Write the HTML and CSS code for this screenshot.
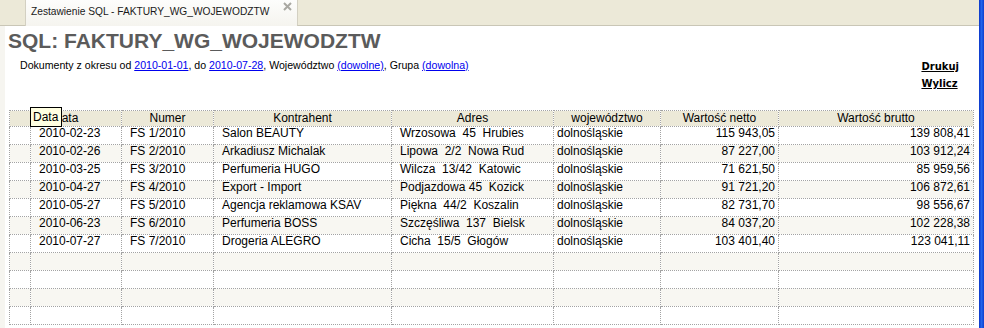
FILE: index.html
```html
<!DOCTYPE html>
<html lang="pl">
<head>
    <meta charset="UTF-8">
    <title>Zestawienie SQL - FAKTURY_WG_WOJEWODZTW</title>
    <link rel="stylesheet" href="styles.css">
</head>
<body>
<div class="window">
    <div class="main">
        <div class="tabs">
            <div class="tabs-lead"></div>
            <div class="tab">
                <span class="tab-title">Zestawienie SQL - FAKTURY_WG_WOJEWODZTW</span>
                <svg class="tab-close" width="9" height="9" viewBox="0 0 9 9"><path d="M1 1L8 8M8 1L1 8" stroke="#a9a8a2" stroke-width="2"/></svg>
            </div>
            <div class="tabs-rest"></div>
        </div>

        <div class="page">
            <h1>SQL: FAKTURY_WG_WOJEWODZTW</h1>

            <div class="toolbar">
                <p class="filters">Dokumenty z okresu od <a href="#">2010-01-01</a>, do <a href="#">2010-07-28</a>, Województwo <a href="#">(dowolne)</a>, Grupa <a href="#">(dowolna)</a></p>
                <div class="actions">
                    <a href="#">Drukuj</a>
                    <a href="#">Wylicz</a>
                </div>
            </div>

            <div class="grid">
                <!-- hover hint over the first header -->
                <div class="tooltip">Data</div>
                <table>
                    <colgroup>
                        <col class="c-sel"><col class="c-date"><col class="c-num"><col class="c-name">
                        <col class="c-addr"><col class="c-prov"><col class="c-net"><col class="c-gross">
                    </colgroup>
                    <tr>
                        <th></th><th class="h-date">Data</th><th>Numer</th><th>Kontrahent</th>
                        <th>Adres</th><th>województwo</th><th>Wartość netto</th><th>Wartość brutto</th>
                    </tr>
                    <tr><td></td><td>2010-02-23</td><td>FS 1/2010</td><td>Salon BEAUTY</td><td class="addr">Wrzosowa  45  Hrubies</td><td class="prov">dolnośląskie</td><td class="num">115 943,05</td><td class="num">139 808,41</td></tr>
                    <tr><td></td><td>2010-02-26</td><td>FS 2/2010</td><td>Arkadiusz Michalak</td><td class="addr">Lipowa  2/2  Nowa Rud</td><td class="prov">dolnośląskie</td><td class="num">87 227,00</td><td class="num">103 912,24</td></tr>
                    <tr><td></td><td>2010-03-25</td><td>FS 3/2010</td><td>Perfumeria HUGO</td><td class="addr">Wilcza  13/42  Katowic</td><td class="prov">dolnośląskie</td><td class="num">71 621,50</td><td class="num">85 959,56</td></tr>
                    <tr><td></td><td>2010-04-27</td><td>FS 4/2010</td><td>Export - Import</td><td class="addr">Podjazdowa 45  Kozick</td><td class="prov">dolnośląskie</td><td class="num">91 721,20</td><td class="num">106 872,61</td></tr>
                    <tr><td></td><td>2010-05-27</td><td>FS 5/2010</td><td>Agencja reklamowa KSAV</td><td class="addr">Piękna  44/2  Koszalin</td><td class="prov">dolnośląskie</td><td class="num">82 731,70</td><td class="num">98 556,67</td></tr>
                    <tr><td></td><td>2010-06-23</td><td>FS 6/2010</td><td>Perfumeria BOSS</td><td class="addr">Szczęśliwa  137  Bielsk</td><td class="prov">dolnośląskie</td><td class="num">84 037,20</td><td class="num">102 228,38</td></tr>
                    <tr><td></td><td>2010-07-27</td><td>FS 7/2010</td><td>Drogeria ALEGRO</td><td class="addr">Cicha  15/5  Głogów</td><td class="prov">dolnośląskie</td><td class="num">103 401,40</td><td class="num">123 041,11</td></tr>
                    <tr class="empty"><td></td><td></td><td></td><td></td><td></td><td></td><td></td><td></td></tr>
                    <tr class="empty"><td></td><td></td><td></td><td></td><td></td><td></td><td></td><td></td></tr>
                    <tr class="empty"><td></td><td></td><td></td><td></td><td></td><td></td><td></td><td></td></tr>
                    <tr class="empty"><td></td><td></td><td></td><td></td><td></td><td></td><td></td><td></td></tr>
                </table>
            </div>
        </div>
    </div>
    <div class="frame-edge"></div>
</div>
</body>
</html>
```

FILE: styles.css
```css
/* XP style report window */
html, body {
    margin: 0;
    padding: 0;
}

body {
    font-family: "Liberation Sans", Arial, sans-serif;
    background-color: #fff;
    color: #000;
    height: 328px;
    overflow: hidden;
}

.window {
    display: flex;
    height: 328px;
}

.main {
    flex: 1;
    min-width: 0;
    display: flex;
    flex-direction: column;
    overflow: hidden;
}

/* blue window frame on the right */
.frame-edge {
    width: 5px;
    background: linear-gradient(to right, #0a36c8, #2263ea 50%, #0b3fcf);
}

/* tab strip */
.tabs {
    display: flex;
    height: 26px;
    flex-shrink: 0;
    background-color: #ece9d8;
}

.tabs-lead {
    width: 25px;
    border-bottom: 1px solid #c9c6b6;
    box-sizing: border-box;
}

.tab {
    width: 272px;
    display: flex;
    align-items: flex-start;
    padding: 5px 0 0 5px;
    box-sizing: border-box;
    background: linear-gradient(#fdfdfc, #f5f4ef);
    border-left: 1px solid #d3d0c2;
}

.tab-title {
    font-size: 10.2px;
    line-height: 13px;
    white-space: nowrap;
    color: #1a1a1a;
}

.tab-close {
    margin-left: auto;
    margin-right: 5px;
    margin-top: -3px;
    flex-shrink: 0;
}

.tabs-rest {
    flex: 1;
    border-left: 1px solid #d3d0c2;
    border-bottom: 1px solid #c9c6b6;
}

/* report page */
.page {
    flex: 1;
    min-height: 0;
    overflow: hidden;
    border-left: 5px solid #f6f5f0;
    padding: 3px 0 0 3px;
}

h1 {
    margin: 0;
    font-size: 21px;
    line-height: 24px;
    font-weight: bold;
    color: #5b5b5b;
}

.toolbar {
    display: flex;
    justify-content: space-between;
    align-items: flex-start;
    margin-top: 3px;
}

.filters {
    margin: 1px 0 0 12px;
    font-size: 10.6px;
    line-height: 16px;
}

.filters a {
    color: #0000ee;
}

.actions {
    display: flex;
    flex-direction: column;
    margin: 2px 20px 0 0;
}

.actions a {
    font-family: "DejaVu Sans", sans-serif;
    font-size: 10px;
    line-height: 17px;
    font-weight: bold;
    color: #000;
}

/* grid */
.grid {
    position: relative;
    margin: 18px 0 0 1px;
}

.tooltip {
    position: absolute;
    left: 21px;
    top: -3px;
    width: 28px;
    height: 18px;
    border: 1px solid #000;
    background-color: #ffffe1;
    font-size: 12px;
    line-height: 18px;
    padding-left: 2px;
}

table {
    table-layout: fixed;
    width: 964px;
    border-collapse: collapse;
    font-size: 12px;
}

.c-sel { width: 21px; }
.c-date { width: 91px; }
.c-num { width: 92px; }
.c-name { width: 178px; }
.c-addr { width: 162px; }
.c-prov { width: 107px; }
.c-net { width: 118px; }
.c-gross { width: 195px; }

th, td {
    border: 1px dotted #a3a3a3;
    padding: 0 4px 0 8px;
    white-space: pre;
    overflow: hidden;
}

th {
    background-color: #ece9d8;
    font-weight: normal;
    line-height: 15px;
    text-align: center;
    padding: 0;
}

th.h-date {
    text-align: left;
    padding-left: 22px;
}

td {
    line-height: 13px;
    height: 13px;
    padding-bottom: 4px;
    vertical-align: top;
}

tr:nth-child(odd) td {
    background-color: #f8f7f2;
}

td.addr {
    padding-left: 8px;
}

td.prov {
    padding-left: 3px;
}

td.num {
    text-align: right;
    padding-right: 3px;
}
```
